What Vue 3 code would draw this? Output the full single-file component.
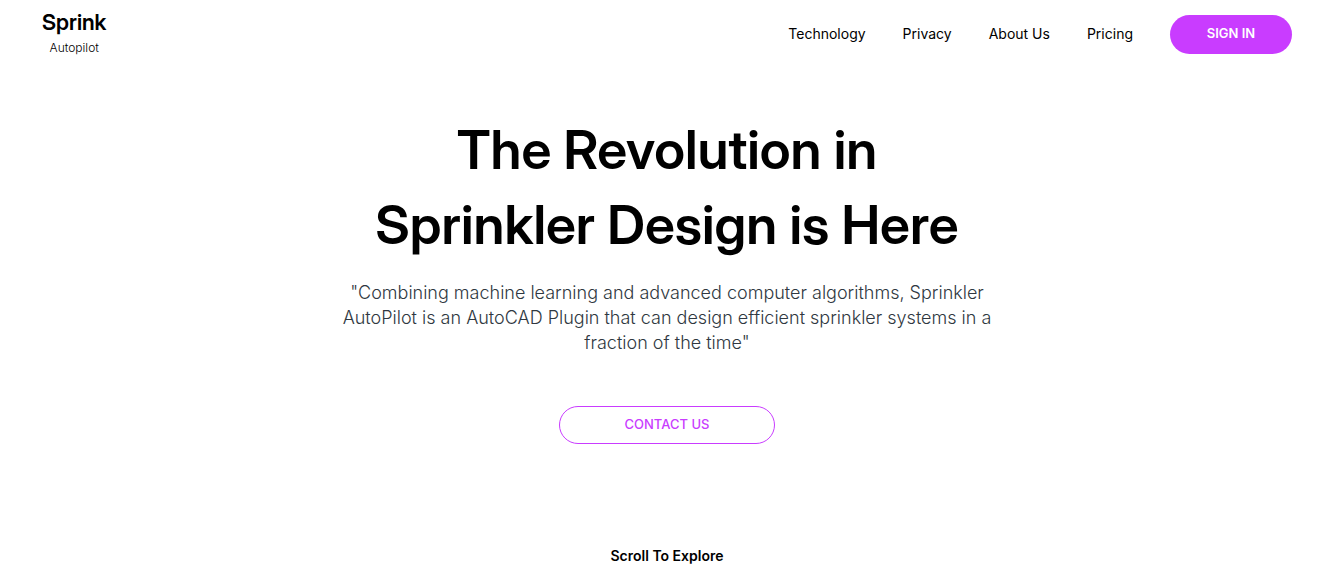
<script setup>
const links = [
  { label: 'Technology', href: '#technology' },
  { label: 'Privacy', href: '#privacy' },
  { label: 'About Us', href: '#about' },
  { label: 'Pricing', href: '#pricing' },
]
</script>

<template>
  <div class="page">
    <header class="header">
      <a class="brand" href="#">
        <span class="brand-name">Sprink</span>
        <span class="brand-sub">Autopilot</span>
      </a>
      <nav class="nav">
        <a v-for="link in links" :key="link.label" class="nav-link" :href="link.href">{{ link.label }}</a>
        <button class="sign-in" type="button">SIGN IN</button>
      </nav>
    </header>
    <main class="hero">
      <h1 class="title">The Revolution in<br />Sprinkler Design is Here</h1>
      <p class="lead">"Combining machine learning and advanced computer algorithms, Sprinkler AutoPilot is an AutoCAD Plugin that can design efficient sprinkler systems in a fraction of the time"</p>
      <button class="contact" type="button">CONTACT US</button>
      <p class="scroll">Scroll To Explore</p>
    </main>
  </div>
</template>

<style>
body {
  margin: 0;
  background: #fff;
}
</style>

<style scoped>
.page {
  font-family: Inter, sans-serif;
  color: #000;
}
.header {
  display: flex;
  align-items: center;
  justify-content: space-between;
  padding: 7px 51px 9px 42px;
}
.brand {
  display: flex;
  flex-direction: column;
  align-items: center;
  color: inherit;
  text-decoration: none;
}
.brand-name {
  font-family: "Inter Display", Inter, sans-serif;
  font-size: 22px;
  font-weight: 600;
  line-height: 30px;
}
.brand-sub {
  font-size: 12px;
  font-weight: 300;
  line-height: 22px;
}
.nav {
  display: flex;
  align-items: center;
  gap: 37px;
  padding-top: 2px;
}
.nav-link {
  font-size: 14px;
  font-weight: 400;
  line-height: 20px;
  color: inherit;
  text-decoration: none;
}
.sign-in {
  width: 122px;
  height: 39px;
  padding: 0 0 2px;
  border: 0;
  border-radius: 20px;
  background: #c93cff;
  color: #fff;
  font: 600 13px/20px Inter, sans-serif;
}
.hero {
  display: flex;
  flex-direction: column;
  align-items: center;
  padding: 44px 9px 0 0;
  text-align: center;
}
.title {
  margin: 0;
  font-family: "Inter Display", Inter, sans-serif;
  font-size: 54px;
  font-weight: 600;
  line-height: 75px;
}
.lead {
  max-width: 660px;
  margin: 18px 0 0;
  font-size: 18px;
  font-weight: 300;
  line-height: 25px;
  color: #2f3841;
}
.contact {
  width: 216px;
  height: 38px;
  margin-top: 51px;
  padding: 0 0 2px;
  border: 1px solid #c93cff;
  border-radius: 19px;
  background: #fff;
  color: #c93cff;
  font: 500 13px/20px Inter, sans-serif;
}
.scroll {
  margin: 102px 0 0;
  font-size: 14px;
  font-weight: 600;
  line-height: 20px;
}
</style>
